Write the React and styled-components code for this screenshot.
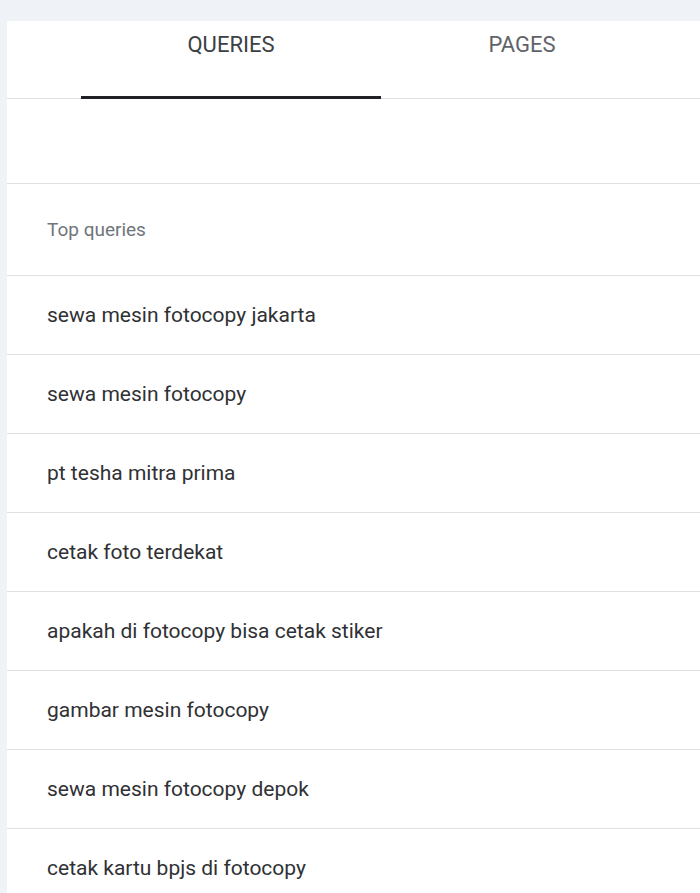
import React, { useState } from 'react';
import styled, { createGlobalStyle } from 'styled-components';

const Global = createGlobalStyle`
  html, body {
    margin: 0;
    padding: 0;
    background: #eff2f7;
    font-family: Roboto, "Liberation Sans", Arial, sans-serif;
  }
`;

const Page = styled.div`
  padding: 21px 0 0 7px;
  height: 872px;
  overflow: hidden;
`;

const Card = styled.div`
  background: #ffffff;
  min-height: 872px;
`;

const TabBar = styled.div`
  display: flex;
  height: 77px;
  padding-left: 74px;
  border-bottom: 1px solid #e0e0e0;
`;

const Tab = styled.div`
  width: ${props => props.width}px;
  display: flex;
  justify-content: center;
  padding-top: 11px;
  box-sizing: border-box;
  font-size: 22px;
  color: ${props => (props.active ? '#3c4043' : '#5f6368')};
  border-bottom: 3px solid ${props => (props.active ? '#202124' : 'transparent')};
  margin-bottom: -1px;
  cursor: pointer;
`;

const Spacer = styled.div`
  height: 84px;
  border-bottom: 1px solid #e0e0e0;
`;

const Row = styled.div`
  display: flex;
  align-items: center;
  height: ${props => props.height}px;
  padding-left: 40px;
  border-bottom: 1px solid #e0e0e0;
  font-size: ${props => (props.header ? '19px' : '21px')};
  color: ${props => (props.header ? '#70757a' : '#303134')};
`;

const queries = [
  'sewa mesin fotocopy jakarta',
  'sewa mesin fotocopy',
  'pt tesha mitra prima',
  'cetak foto terdekat',
  'apakah di fotocopy bisa cetak stiker',
  'gambar mesin fotocopy',
  'sewa mesin fotocopy depok',
  'cetak kartu bpjs di fotocopy',
];

export default function App() {
  const [tab, setTab] = useState('queries');
  return (
    <>
      <Global />
      <Page>
        <Card>
          <TabBar>
            <Tab width={300} active={tab === 'queries'} onClick={() => setTab('queries')}>QUERIES</Tab>
            <Tab width={282} active={tab === 'pages'} onClick={() => setTab('pages')}>PAGES</Tab>
          </TabBar>
          <Spacer />
          <Row header height={91}>Top queries</Row>
          {queries.map((q, i) => (
            <Row key={i} height={78}>{q}</Row>
          ))}
        </Card>
      </Page>
    </>
  );
}
